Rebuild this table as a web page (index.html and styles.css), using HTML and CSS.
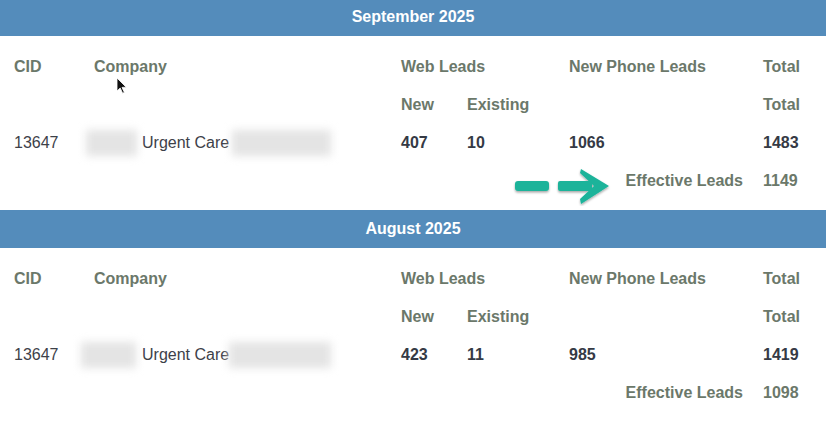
FILE: index.html
```html
<!DOCTYPE html>
<html lang="en">
<head>
<meta charset="utf-8">
<title>Leads Report</title>
<link rel="stylesheet" href="styles.css">
</head>
<body>
<div class="report">
  <section class="month">
    <h2 class="band">September 2025</h2>
    <div class="grid">
      <div class="th">CID</div>
      <div class="th">Company</div>
      <div class="th span2">Web Leads</div>
      <div class="th">New Phone Leads</div>
      <div class="th">Total</div>

      <div></div>
      <div></div>
      <div class="th">New</div>
      <div class="th">Existing</div>
      <div></div>
      <div class="th">Total</div>

      <div class="td">13647</div>
      <div class="td company"><span class="blur b1"></span>Urgent Care<span class="blur b2"></span></div>
      <div class="td num">407</div>
      <div class="td num">10</div>
      <div class="td num">1066</div>
      <div class="td num">1483</div>

      <div class="eff-label span5">
        <svg class="arrow" width="104" height="44" viewBox="0 0 104 44">
          <defs>
            <filter id="sh" x="-20%" y="-20%" width="140%" height="160%">
              <feDropShadow dx="0" dy="1.5" stdDeviation="1.2" flood-color="#000" flood-opacity="0.35"/>
            </filter>
          </defs>
          <g fill="#1db39a" filter="url(#sh)">
            <rect x="6" y="19" width="34" height="10" rx="3"/>
            <rect x="49" y="19" width="34" height="10" rx="2"/>
            <path d="M72 7 L100 24 L72 42 L71 37 L85 24 L71 11 Z"/>
          </g>
        </svg>
        <span>Effective Leads</span>
      </div>
      <div class="eff-val">1149</div>
    </div>
  </section>

  <section class="month">
    <h2 class="band">August 2025</h2>
    <div class="grid">
      <div class="th">CID</div>
      <div class="th">Company</div>
      <div class="th span2">Web Leads</div>
      <div class="th">New Phone Leads</div>
      <div class="th">Total</div>

      <div></div>
      <div></div>
      <div class="th">New</div>
      <div class="th">Existing</div>
      <div></div>
      <div class="th">Total</div>

      <div class="td">13647</div>
      <div class="td company"><span class="blur b3"></span>Urgent Care<span class="blur b4"></span></div>
      <div class="td num">423</div>
      <div class="td num">11</div>
      <div class="td num">985</div>
      <div class="td num">1419</div>

      <div class="eff-label span5"><span>Effective Leads</span></div>
      <div class="eff-val">1098</div>
    </div>
  </section>

  <svg class="cursor" width="12" height="18" viewBox="0 0 12 18">
    <path d="M1 1 L1 14 L4.2 11 L6.6 16.2 L8.4 15.4 L6 10.4 L10.2 10.2 Z" fill="#111" stroke="#fff" stroke-width="0.8"/>
  </svg>
</div>
</body>
</html>
```

FILE: styles.css
```css
html, body {
  margin: 0;
  padding: 0;
  background: #ffffff;
}

body {
  font-family: "Liberation Sans", Arial, Helvetica, sans-serif;
  font-size: 16px;
  color: #3d4149;
  overflow: hidden;
}

.report {
  position: relative;
  margin-top: -2px;
}

.month {
  padding-bottom: 10px;
}

.band {
  margin: 0;
  height: 38px;
  line-height: 38px;
  background: #548cbb;
  color: #ffffff;
  font-size: 16px;
  font-weight: bold;
  text-align: center;
}

.grid {
  display: grid;
  grid-template-columns: 80px 307px 66px 102px 194px 1fr;
  grid-auto-rows: 38px;
  padding: 12px 0 0 14px;
  align-items: center;
}

.grid > div {
  white-space: nowrap;
}

.th {
  font-weight: bold;
  color: #6b786a;
}

.span2 {
  grid-column: span 2;
}

.span5 {
  grid-column: span 5;
}

.td {
  color: #3d4149;
}

.num {
  font-weight: bold;
  color: #353a45;
}

.company {
  display: flex;
  align-items: center;
  margin-left: -14px;
}

.blur {
  display: inline-block;
  height: 26px;
  background: #e4e4e4;
  filter: blur(4px);
}

.b1 { width: 51px; margin: 0 5px 0 6px; }
.b2 { width: 99px; margin-left: 3px; }
.b3 { width: 55px; margin: 0 6px 0 1px; }
.b4 { width: 102px; margin-left: 0; }

.eff-label {
  display: flex;
  align-items: center;
  justify-content: flex-end;
  gap: 13px;
  padding-right: 20px;
  font-weight: bold;
  color: #6b786a;
  height: 38px;
}

.arrow {
  display: block;
  margin-top: 6px;
}

.eff-val {
  font-weight: bold;
  color: #6b786a;
}

.cursor {
  position: absolute;
  left: 116px;
  top: 79px;
}
```
